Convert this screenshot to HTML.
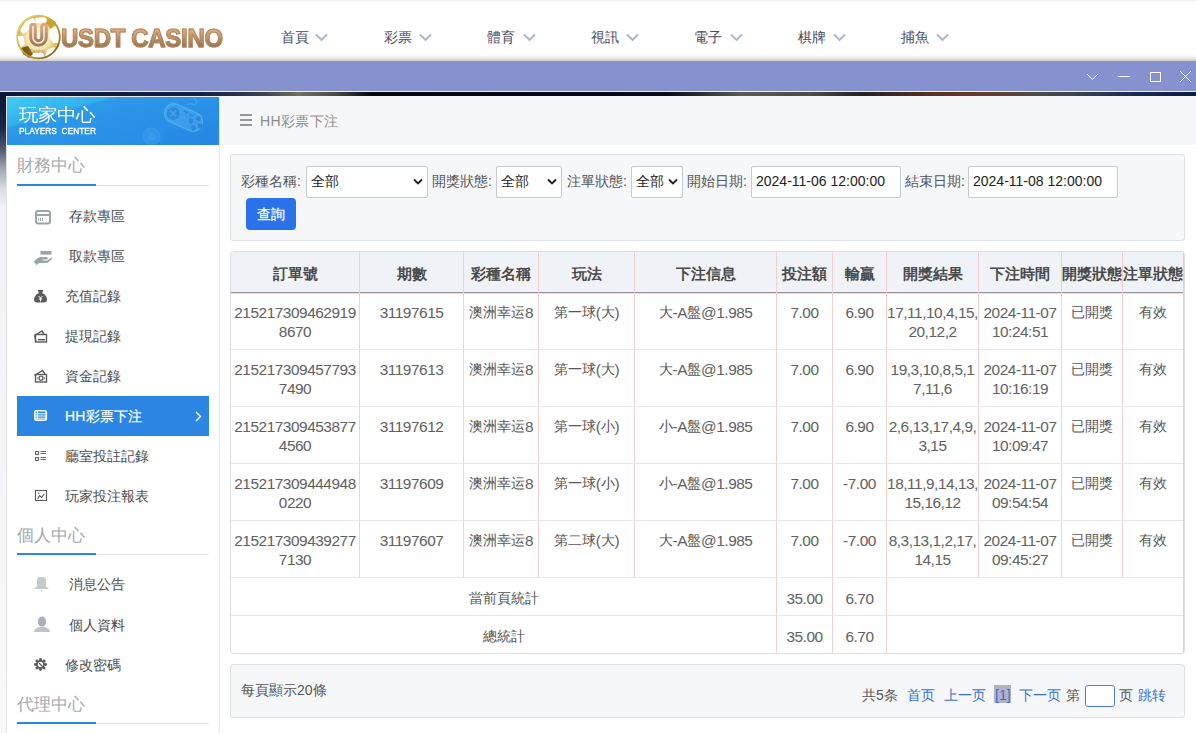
<!DOCTYPE html><html><head><meta charset="utf-8"><style>
*{box-sizing:border-box;margin:0;padding:0}
html,body{width:1196px;height:733px;overflow:hidden;font-family:"Liberation Sans",sans-serif;background:#fff;position:relative}
.a{position:absolute;white-space:nowrap}
#topline{left:0;top:0;width:1196px;height:2px;background:linear-gradient(180deg,#f1f1f1,#f9f9f9)}
#header{left:0;top:2px;width:1196px;height:58px;background:#fff}
#hshadow{left:0;top:54px;width:1196px;height:7px;background:linear-gradient(180deg,#fff 0%,#f6f6f6 35%,#e2e2e2 70%,#cdcbc7 100%)}
.nav{top:28px;font-size:14px;color:#4d4b5e;line-height:18px}
#purple{left:0;top:61px;width:1196px;height:30px;background:#8592cf}
#wline{left:0;top:91px;width:1196px;height:1px;background:#f4f4fa}
#dark{left:0;top:92px;width:1196px;height:4px;background:linear-gradient(90deg,#0c1838 0%,#13204a 17%,#3c4050 22%,#70705f 25%,#4a4a48 28%,#06070f 31%,#040816 50%,#0a0c18 56%,#5a5a58 62%,#4a4a48 68%,#222 72%,#5a3020 78%,#6a3a28 82%,#4a4a48 87%,#3a4250 90%,#1a2a58 95%,#0c1a40 100%)}
#leftbg{left:0;top:96px;width:7px;height:637px;background:linear-gradient(180deg,#0c1636 0px,#1a2546 32px,#4e566e 52px,#9ea3b0 72px,#d8dade 92px,#f3f3f5 112px,#f8f8f9 637px)}
#sidebar{left:6px;top:96px;width:214px;height:637px;background:#fff;border-left:1px solid #dfe2e6;border-right:1px solid #e4e6ea;border-top:1px solid #e8eaee}
#sbhead{left:7px;top:97px;width:212px;height:48px;overflow:hidden;background:linear-gradient(164deg,#3fcbf4 0%,#33b0ee 27%,#2c9ae9 29.5%,#2a92e7 55%,#2486e4 100%)}
#crumb{left:220px;top:96px;width:976px;height:49px;background:#f6f7f9}
.sec{left:17px;font-size:17px;color:#a3a8ae;line-height:20px}
.secl{left:17px;width:192px;height:1px;background:#e3e3e3}
.secb{left:17px;width:79px;height:2px;background:#2b86e3}
.item{font-size:14px;color:#4c4c4c;line-height:16px}
.lbl{font-size:14px;color:#555;line-height:16px}
.sel{background:#fff;border:1px solid #c6c9cd;border-radius:2px;height:32px;font-size:14px;color:#222;line-height:29px;padding-left:4px}
.th{font-size:15px;font-weight:bold;color:#4a4a4a;text-align:center;line-height:18px}
.td{font-size:14px;color:#555;text-align:center;line-height:18.6px;letter-spacing:0}
.n{font-size:15.4px;letter-spacing:-.46px;vertical-align:-0.6px;line-height:18.6px;color:#606060}
.vl{width:1px;background:#f3cfcf}
.hl{height:1px;background:#e6e7ea}
.pg{font-size:14px;line-height:16px;color:#555}
.bl{color:#3c6fd6}
</style></head><body>
<div id="topline" class="a"></div><div id="header" class="a"></div><div id="hshadow" class="a"></div>
<svg class="a" style="left:14px;top:12px" width="50" height="50" viewBox="0 0 50 50">
<defs>
<linearGradient id="gold" x1="0" y1="0" x2="1" y2="1"><stop offset="0" stop-color="#f0dc8c"/><stop offset=".4" stop-color="#d4b040"/><stop offset=".7" stop-color="#b08c28"/><stop offset="1" stop-color="#6a5014"/></linearGradient>
<linearGradient id="ug" x1="0" y1="0" x2="0" y2="1"><stop offset="0" stop-color="#d4a680"/><stop offset="1" stop-color="#a47a55"/></linearGradient>
<radialGradient id="cg" cx=".5" cy=".5" r=".5"><stop offset="0" stop-color="#fffdf4"/><stop offset=".55" stop-color="#f4e6b0"/><stop offset="1" stop-color="#d2b048"/></radialGradient>
</defs>
<circle cx="24.5" cy="25" r="21.5" fill="url(#cg)"/>
<path d="M6 18 L12 9 L19 6 L22 10 L17 16 L9 22Z" fill="#fff"/>
<path d="M21 6 L31 5 L34 9 L29 12 L22 11Z" fill="#fff"/>
<path d="M36 17 L42 14 L46 22 L45 31 L39 31 L35 24Z" fill="#fff"/>
<path d="M4 24 L9 24 L11 32 L6 37 L4 32Z" fill="#fff"/>
<path d="M18 41 L28 40 L31 46 L22 47 L16 45Z" fill="#fff"/>
<path d="M33 38 L40 35 L42 40 L36 45 L31 45Z" fill="#fff"/>
<path d="M7 36 L14 34 L19 42 L15 46 L9 42Z" fill="#7a5c18"/>
<path d="M34 5 L42 10 L37 17 L32 11Z" fill="#c9a030"/>
<circle cx="24.5" cy="25" r="21.3" fill="none" stroke="url(#gold)" stroke-width="1.8"/>
<path d="M19 14.5 v11 a5.5 5.5 0 0 0 11 0 v-11" fill="none" stroke="url(#ug)" stroke-width="7.5" stroke-linecap="round"/>
<path d="M19 14.5 v11 a5.5 5.5 0 0 0 11 0 v-11" fill="none" stroke="#f6ead8" stroke-width="1.6" stroke-linecap="round"/>
<text x="15" y="40.5" font-size="5" fill="#b08866" font-family="Liberation Sans">Casino</text>
</svg>
<div class="a" style="left:61px;top:21.5px;font-size:26.2px;font-weight:bold;letter-spacing:-0.3px;line-height:32px;background:linear-gradient(180deg,#dcac80 28%,#b68c64 55%,#94714a 78%);-webkit-background-clip:text;background-clip:text;color:transparent;-webkit-text-stroke:1.1px #b08862;transform:scaleX(0.913);transform-origin:left top">USDT CASINO</div>
<div class="a nav" style="left:281px">首頁</div>
<svg class="a" style="left:315px;top:33px" width="13" height="9" viewBox="0 0 13 9"><path d="M1 1.5 L6.5 7 L12 1.5" fill="none" stroke="#aab4d0" stroke-width="1.9"/></svg>
<div class="a nav" style="left:384px">彩票</div>
<svg class="a" style="left:419px;top:33px" width="13" height="9" viewBox="0 0 13 9"><path d="M1 1.5 L6.5 7 L12 1.5" fill="none" stroke="#aab4d0" stroke-width="1.9"/></svg>
<div class="a nav" style="left:487px">體育</div>
<svg class="a" style="left:522.5px;top:33px" width="13" height="9" viewBox="0 0 13 9"><path d="M1 1.5 L6.5 7 L12 1.5" fill="none" stroke="#aab4d0" stroke-width="1.9"/></svg>
<div class="a nav" style="left:590.5px">視訊</div>
<svg class="a" style="left:626px;top:33px" width="13" height="9" viewBox="0 0 13 9"><path d="M1 1.5 L6.5 7 L12 1.5" fill="none" stroke="#aab4d0" stroke-width="1.9"/></svg>
<div class="a nav" style="left:694px">電子</div>
<svg class="a" style="left:729.5px;top:33px" width="13" height="9" viewBox="0 0 13 9"><path d="M1 1.5 L6.5 7 L12 1.5" fill="none" stroke="#aab4d0" stroke-width="1.9"/></svg>
<div class="a nav" style="left:798px">棋牌</div>
<svg class="a" style="left:833px;top:33px" width="13" height="9" viewBox="0 0 13 9"><path d="M1 1.5 L6.5 7 L12 1.5" fill="none" stroke="#aab4d0" stroke-width="1.9"/></svg>
<div class="a nav" style="left:901px">捕魚</div>
<svg class="a" style="left:936px;top:33px" width="13" height="9" viewBox="0 0 13 9"><path d="M1 1.5 L6.5 7 L12 1.5" fill="none" stroke="#aab4d0" stroke-width="1.9"/></svg>
<div id="purple" class="a"></div><div id="wline" class="a"></div><div id="dark" class="a"></div>
<svg class="a" style="left:1080px;top:64px" width="116" height="24" viewBox="0 0 116 24"><path d="M7 10 L12.5 15.5 L18 10" fill="none" stroke="#fff" stroke-width="1"/><path d="M38 12.5 H50" stroke="#fff" stroke-width="1"/><rect x="70.5" y="8.5" width="10" height="9" fill="none" stroke="#fff" stroke-width="1"/><path d="M100 7 L111 18 M111 7 L100 18" stroke="#fff" stroke-width="1"/></svg>
<div id="leftbg" class="a"></div><div id="sidebar" class="a"></div>
<div id="sbhead" class="a">
<svg class="a" style="left:0;top:0" width="212" height="48" viewBox="0 0 212 48">
<g transform="translate(176.5,20.5) rotate(24)"><rect x="-20" y="-9.5" width="40" height="19" rx="9.5" fill="#56b2f2" fill-opacity=".45" stroke="#62bcf5" stroke-opacity=".6" stroke-width="1.2"/></g>
<circle cx="166.2" cy="16.5" r="6.3" fill="#2a84dc" opacity=".85"/>
<path d="M163 13.5 L169.4 19.5 M169.4 13.5 L163 19.5" stroke="#4aa6ee" stroke-width="1.8" opacity=".8"/>
<path d="M177 14 L181 16 M182 17 L186 19" stroke="#2a84dc" stroke-width="1.6" opacity=".85"/>
<g fill="#2a84dc" opacity=".85"><circle cx="184" cy="24" r="2.4"/><circle cx="191.5" cy="21.5" r="2.4"/><circle cx="186.5" cy="31" r="2.4"/><circle cx="193" cy="29" r="2.4"/></g>
<path d="M180 8 C183 5 186 9 189 7 C191 5.5 189 3 187.5 1" stroke="#62bcf5" stroke-opacity=".6" stroke-width="1" fill="none"/>
<circle cx="144.6" cy="39.2" r="8.5" fill="#40a2ee" fill-opacity=".4" stroke="#54b0f2" stroke-opacity=".2" stroke-width="1.5"/><circle cx="144.6" cy="40" r="4" fill="#48aaf0" fill-opacity=".35"/>
</svg>
<div class="a" style="left:12px;top:8px;font-size:19px;line-height:22px;color:#fff;transform:scaleY(.93);transform-origin:left top">玩家中心</div>
<div class="a" style="left:12px;top:29px;font-size:9.2px;line-height:11px;color:#fff;letter-spacing:0px;-webkit-text-stroke:.3px #fff;transform:scaleX(0.91);transform-origin:left top">PLAYERS&nbsp; CENTER</div>
</div>
<div class="a sec" style="top:156px">財務中心</div>
<div class="a secl" style="top:185px"></div><div class="a secb" style="top:184px"></div>
<svg class="a" style="left:34px;top:209px" width="18" height="16" viewBox="0 0 18 16"><rect x="2" y="2" width="14" height="12.5" rx="2" fill="none" stroke="#9aa3ab" stroke-width="2"/><path d="M2 6 H16" stroke="#9aa3ab" stroke-width="2"/><path d="M4.5 9 v2.5 M6.5 9 v2.5 M8.5 9 v2.5" stroke="#9aa3ab" stroke-width="1" shape-rendering="crispEdges"/></svg>
<svg class="a" style="left:33px;top:250px" width="20" height="15" viewBox="0 0 20 15"><rect x="7.5" y="1" width="11" height="3.6" fill="#9aa3ab"/><path d="M0.8 11.6 L4.2 8.6 C5.6 7.4 7 7 8.6 7 H13.2 C14.3 7 14.8 7.6 14.8 8.3 C14.8 9 14.3 9.6 13.2 9.6 H9.6 V10.6 H14.4 L18.2 7.6 C18.9 7.1 19.6 7.5 19.3 8.3 L16.2 11.6 C15.4 12.5 14.4 13 13.2 13 H6.2 L3.4 15 Z" fill="#9aa3ab"/></svg>
<svg class="a" style="left:33px;top:289px" width="15" height="14" viewBox="0 0 15 14"><path d="M4.5 1 H10.5 L9 4 C12 5 14 8 14 10.5 C14 12.5 13 13.5 11 13.5 H4 C2 13.5 1 12.5 1 10.5 C1 8 3 5 6 4Z" fill="#5a5a5a"/><path d="M5.5 7 L7.5 9 L9.5 7 M7.5 9 V12.5 M5.8 10 H9.2" stroke="#fff" stroke-width="1" fill="none"/></svg>
<svg class="a" style="left:33px;top:329px" width="15" height="14" viewBox="0 0 15 14"><path d="M1.5 6.5 L9 2 L11 5" fill="none" stroke="#5a5a5a" stroke-width="1.4"/><rect x="2.5" y="5.5" width="11" height="7.5" fill="none" stroke="#5a5a5a" stroke-width="1.4"/><path d="M1.5 6.5 L3 12.5" stroke="#5a5a5a" stroke-width="1.2"/><rect x="5" y="10" width="7" height="1.4" fill="#5a5a5a"/></svg>
<svg class="a" style="left:33px;top:369px" width="15" height="14" viewBox="0 0 15 14"><path d="M1.5 6.5 L9.5 1.5 L12 5" fill="none" stroke="#5a5a5a" stroke-width="1.4"/><rect x="2.5" y="5.5" width="11" height="7.5" fill="none" stroke="#5a5a5a" stroke-width="1.4"/><ellipse cx="8" cy="9.2" rx="2" ry="2" fill="none" stroke="#5a5a5a" stroke-width="1.3"/><path d="M4 9.2 H5 M11 9.2 H12" stroke="#5a5a5a" stroke-width="1.3"/></svg>
<div class="a" style="left:17px;top:396px;width:192px;height:40px;background:#2b86e3"></div>
<svg class="a" style="left:33px;top:409px" width="15" height="13" viewBox="0 0 15 13"><rect x="1.8" y="1.8" width="11.5" height="9.5" rx="1.6" fill="none" stroke="#fff" stroke-width="1.6"/><path d="M1.8 4.8 H13.3 M1.8 7 H13.3 M1.8 9.2 H13.3" stroke="#fff" stroke-width="1.1"/><path d="M4.3 2 V11" stroke="#fff" stroke-width="1"/></svg>
<svg class="a" style="left:34px;top:450px" width="13" height="12" viewBox="0 0 13 12"><rect x="1.5" y="1.5" width="3" height="3" rx=".6" fill="none" stroke="#5a5a5a" stroke-width="1.1"/><rect x="1.5" y="7.5" width="3" height="3" rx=".6" fill="none" stroke="#5a5a5a" stroke-width="1.1"/><path d="M6.5 1.5 H12 M6.5 3.5 H12 M6.5 7.5 H12 M6.5 9.5 H12" stroke="#6a6a6a" stroke-width="1"/></svg>
<svg class="a" style="left:34px;top:489px" width="14" height="14" viewBox="0 0 14 14"><rect x="1.5" y="1.5" width="11" height="10" fill="none" stroke="#5a5a5a" stroke-width="1.1"/><path d="M3.5 10 L5.6 6.6 L7.6 8.4 L10.2 5" fill="none" stroke="#5a5a5a" stroke-width="1.1"/><circle cx="4.6" cy="4.2" r=".7" fill="#5a5a5a"/></svg>
<svg class="a" style="left:33px;top:576px" width="17" height="17" viewBox="0 0 17 17"><path d="M1 13 L4 10.3 V4.5 C4 2.3 5.5 1 7 1 H10 C11.5 1 13 2.3 13 4.5 V10.3 L16 13 Z" fill="#c5cad1"/><path d="M7.3 14 H9.7 L8.5 15.6Z" fill="#c5cad1"/></svg>
<svg class="a" style="left:33px;top:616px" width="18" height="17" viewBox="0 0 18 17"><ellipse cx="9" cy="5.6" rx="4.2" ry="5" fill="#a9b2bb"/><path d="M1 16 C1.5 12.3 5 10.8 9 10.8 C13 10.8 16.5 12.3 17 16Z" fill="#bcc3ca"/></svg>
<svg class="a" style="left:33px;top:657px" width="15" height="15" viewBox="0 0 15 15"><g fill="#5a5a5a"><circle cx="12.60" cy="7.50" r="1.45"/><circle cx="11.11" cy="11.11" r="1.45"/><circle cx="7.50" cy="12.60" r="1.45"/><circle cx="3.89" cy="11.11" r="1.45"/><circle cx="2.40" cy="7.50" r="1.45"/><circle cx="3.89" cy="3.89" r="1.45"/><circle cx="7.50" cy="2.40" r="1.45"/><circle cx="11.11" cy="3.89" r="1.45"/></g><circle cx="7.5" cy="7.5" r="3.6" fill="none" stroke="#5a5a5a" stroke-width="1.8"/><path d="M6 6 L9.5 9.5" stroke="#5a5a5a" stroke-width="1.3"/></svg>
<div class="a item" style="left:69px;top:208px;color:#4c4c4c">存款專區</div>
<div class="a item" style="left:69px;top:248px;color:#4c4c4c">取款專區</div>
<div class="a item" style="left:65px;top:288px;color:#4c4c4c">充值記錄</div>
<div class="a item" style="left:65px;top:328px;color:#4c4c4c">提現記錄</div>
<div class="a item" style="left:65px;top:368px;color:#4c4c4c">資金記錄</div>
<div class="a item" style="left:65px;top:408px;color:#fff"><span style="-webkit-text-stroke:.2px #fff;letter-spacing:.2px">HH彩票下注</span></div>
<div class="a item" style="left:65px;top:448px;color:#4c4c4c">廳室投註記錄</div>
<div class="a item" style="left:65px;top:488px;color:#4c4c4c">玩家投注報表</div>
<div class="a item" style="left:69px;top:576px;color:#4c4c4c">消息公告</div>
<div class="a item" style="left:69px;top:617px;color:#4c4c4c">個人資料</div>
<div class="a item" style="left:65px;top:657px;color:#4c4c4c">修改密碼</div>
<svg class="a" style="left:194px;top:411px" width="9" height="11" viewBox="0 0 9 11"><path d="M2 1 L6.5 5.5 L2 10" fill="none" stroke="#fff" stroke-width="1.4"/></svg>
<div class="a sec" style="top:526px">個人中心</div>
<div class="a secl" style="top:554px"></div><div class="a secb" style="top:553px"></div>
<div class="a sec" style="top:695px">代理中心</div>
<div class="a secl" style="top:723px"></div><div class="a secb" style="top:722px"></div>
<div id="crumb" class="a"></div>
<svg class="a" style="left:239px;top:113px" width="14" height="14" viewBox="0 0 14 14"><path d="M1 2 H13 M1 7 H13 M1 12 H13" stroke="#777" stroke-width="1.5"/></svg>
<div class="a" style="left:260px;top:112.5px;font-size:14px;line-height:16px;color:#8c8c8c;letter-spacing:.35px">HH彩票下注</div>
<div class="a" style="left:230px;top:154px;width:955px;height:87px;background:#f6f7f9;border:1px solid #dcdfe3;border-radius:3px"></div>
<div class="a lbl" style="left:241px;top:173px">彩種名稱:</div>
<div class="a sel" style="left:306px;top:166px;width:122px">全部</div>
<svg class="a" style="left:413px;top:178px" width="10" height="8" viewBox="0 0 10 8"><path d="M1 1.5 L5 5.5 L9 1.5" fill="none" stroke="#222" stroke-width="1.8"/></svg>
<div class="a lbl" style="left:432px;top:173px">開獎狀態:</div>
<div class="a sel" style="left:496px;top:166px;width:66px">全部</div>
<svg class="a" style="left:547px;top:178px" width="10" height="8" viewBox="0 0 10 8"><path d="M1 1.5 L5 5.5 L9 1.5" fill="none" stroke="#222" stroke-width="1.8"/></svg>
<div class="a lbl" style="left:567px;top:173px">注單狀態:</div>
<div class="a sel" style="left:631px;top:166px;width:52px">全部</div>
<svg class="a" style="left:668px;top:178px" width="10" height="8" viewBox="0 0 10 8"><path d="M1 1.5 L5 5.5 L9 1.5" fill="none" stroke="#222" stroke-width="1.8"/></svg>
<div class="a lbl" style="left:687px;top:173px">開始日期:</div>
<div class="a sel" style="left:751px;top:166px;width:150px;color:#222">2024-11-06 12:00:00</div>
<div class="a lbl" style="left:905px;top:173px">結束日期:</div>
<div class="a sel" style="left:968px;top:166px;width:150px;color:#222">2024-11-08 12:00:00</div>
<div class="a" style="left:246px;top:198px;width:50px;height:32px;background:#2a72ea;border-radius:4px;color:#fff;font-size:14px;line-height:33px;text-align:center;-webkit-text-stroke:.25px #fff">查詢</div>
<div class="a" style="left:230px;top:251px;width:955px;height:403px;border:1px solid #d9dce0;border-radius:4px;background:#fff"></div>
<div class="a" style="left:231px;top:252px;width:953px;height:40px;background:#eff2f6;border-radius:3px 3px 0 0"></div>
<div class="a" style="left:231px;top:292px;width:953px;height:1px;background:#9a9090"></div>
<div class="a" style="left:231px;top:293px;width:953px;height:1px;background:#e2dede"></div>
<div class="a vl" style="left:359px;top:252px;height:326px"></div>
<div class="a vl" style="left:463px;top:252px;height:326px"></div>
<div class="a vl" style="left:538px;top:252px;height:326px"></div>
<div class="a vl" style="left:634px;top:252px;height:326px"></div>
<div class="a vl" style="left:776px;top:252px;height:401px"></div>
<div class="a vl" style="left:832px;top:252px;height:401px"></div>
<div class="a vl" style="left:886px;top:252px;height:401px"></div>
<div class="a vl" style="left:978px;top:252px;height:326px"></div>
<div class="a vl" style="left:1061px;top:252px;height:326px"></div>
<div class="a vl" style="left:1122px;top:252px;height:326px"></div>
<div class="a vl" style="left:1183px;top:252px;height:326px"></div>
<div class="a vl" style="left:1183px;top:252px;height:401px;background:#eccbd0"></div>
<div class="a hl" style="left:231px;top:349px;width:952px"></div>
<div class="a hl" style="left:231px;top:406px;width:952px"></div>
<div class="a hl" style="left:231px;top:463px;width:952px"></div>
<div class="a hl" style="left:231px;top:520px;width:952px"></div>
<div class="a hl" style="left:231px;top:577px;width:952px"></div>
<div class="a hl" style="left:231px;top:615px;width:952px"></div>
<div class="a th" style="left:231px;top:265px;width:128px;overflow:visible">訂單號</div>
<div class="a th" style="left:360px;top:265px;width:103px;overflow:visible">期數</div>
<div class="a th" style="left:464px;top:265px;width:74px;overflow:visible">彩種名稱</div>
<div class="a th" style="left:539px;top:265px;width:95px;overflow:visible">玩法</div>
<div class="a th" style="left:635px;top:265px;width:141px;overflow:visible">下注信息</div>
<div class="a th" style="left:777px;top:265px;width:55px;overflow:visible">投注額</div>
<div class="a th" style="left:833px;top:265px;width:53px;overflow:visible">輸贏</div>
<div class="a th" style="left:887px;top:265px;width:91px;overflow:visible">開獎結果</div>
<div class="a th" style="left:979px;top:265px;width:82px;overflow:visible">下注時間</div>
<div class="a th" style="left:1062px;top:265px;width:60px;overflow:visible">開獎狀態</div>
<div class="a th" style="left:1123px;top:265px;width:60px;overflow:visible">注單狀態</div>
<div class="a td" style="left:231px;top:303px;width:128px"><span class="n">215217309462919</span><br><span class="n">8670</span></div>
<div class="a td" style="left:360px;top:303px;width:103px"><span class="n">31197615</span></div>
<div class="a td" style="left:464px;top:303px;width:74px">澳洲幸运<span class="n">8</span></div>
<div class="a td" style="left:539px;top:303px;width:95px">第一球<span class="n">(</span>大<span class="n">)</span></div>
<div class="a td" style="left:635px;top:303px;width:141px">大<span class="n">-A</span>盤<span class="n">@1.985</span></div>
<div class="a td" style="left:777px;top:303px;width:55px"><span class="n">7.00</span></div>
<div class="a td" style="left:833px;top:303px;width:53px"><span class="n">6.90</span></div>
<div class="a td" style="left:887px;top:303px;width:91px"><span class="n">17,11,10,4,15,</span><br><span class="n">20,12,2</span></div>
<div class="a td" style="left:979px;top:303px;width:82px"><span class="n">2024-11-07</span><br><span class="n">10:24:51</span></div>
<div class="a td" style="left:1062px;top:303px;width:60px">已開獎</div>
<div class="a td" style="left:1123px;top:303px;width:60px">有效</div>
<div class="a td" style="left:231px;top:360px;width:128px"><span class="n">215217309457793</span><br><span class="n">7490</span></div>
<div class="a td" style="left:360px;top:360px;width:103px"><span class="n">31197613</span></div>
<div class="a td" style="left:464px;top:360px;width:74px">澳洲幸运<span class="n">8</span></div>
<div class="a td" style="left:539px;top:360px;width:95px">第一球<span class="n">(</span>大<span class="n">)</span></div>
<div class="a td" style="left:635px;top:360px;width:141px">大<span class="n">-A</span>盤<span class="n">@1.985</span></div>
<div class="a td" style="left:777px;top:360px;width:55px"><span class="n">7.00</span></div>
<div class="a td" style="left:833px;top:360px;width:53px"><span class="n">6.90</span></div>
<div class="a td" style="left:887px;top:360px;width:91px"><span class="n">19,3,10,8,5,1</span><br><span class="n">7,11,6</span></div>
<div class="a td" style="left:979px;top:360px;width:82px"><span class="n">2024-11-07</span><br><span class="n">10:16:19</span></div>
<div class="a td" style="left:1062px;top:360px;width:60px">已開獎</div>
<div class="a td" style="left:1123px;top:360px;width:60px">有效</div>
<div class="a td" style="left:231px;top:417px;width:128px"><span class="n">215217309453877</span><br><span class="n">4560</span></div>
<div class="a td" style="left:360px;top:417px;width:103px"><span class="n">31197612</span></div>
<div class="a td" style="left:464px;top:417px;width:74px">澳洲幸运<span class="n">8</span></div>
<div class="a td" style="left:539px;top:417px;width:95px">第一球<span class="n">(</span>小<span class="n">)</span></div>
<div class="a td" style="left:635px;top:417px;width:141px">小<span class="n">-A</span>盤<span class="n">@1.985</span></div>
<div class="a td" style="left:777px;top:417px;width:55px"><span class="n">7.00</span></div>
<div class="a td" style="left:833px;top:417px;width:53px"><span class="n">6.90</span></div>
<div class="a td" style="left:887px;top:417px;width:91px"><span class="n">2,6,13,17,4,9,</span><br><span class="n">3,15</span></div>
<div class="a td" style="left:979px;top:417px;width:82px"><span class="n">2024-11-07</span><br><span class="n">10:09:47</span></div>
<div class="a td" style="left:1062px;top:417px;width:60px">已開獎</div>
<div class="a td" style="left:1123px;top:417px;width:60px">有效</div>
<div class="a td" style="left:231px;top:474px;width:128px"><span class="n">215217309444948</span><br><span class="n">0220</span></div>
<div class="a td" style="left:360px;top:474px;width:103px"><span class="n">31197609</span></div>
<div class="a td" style="left:464px;top:474px;width:74px">澳洲幸运<span class="n">8</span></div>
<div class="a td" style="left:539px;top:474px;width:95px">第一球<span class="n">(</span>小<span class="n">)</span></div>
<div class="a td" style="left:635px;top:474px;width:141px">小<span class="n">-A</span>盤<span class="n">@1.985</span></div>
<div class="a td" style="left:777px;top:474px;width:55px"><span class="n">7.00</span></div>
<div class="a td" style="left:833px;top:474px;width:53px"><span class="n">-7.00</span></div>
<div class="a td" style="left:887px;top:474px;width:91px"><span class="n">18,11,9,14,13,</span><br><span class="n">15,16,12</span></div>
<div class="a td" style="left:979px;top:474px;width:82px"><span class="n">2024-11-07</span><br><span class="n">09:54:54</span></div>
<div class="a td" style="left:1062px;top:474px;width:60px">已開獎</div>
<div class="a td" style="left:1123px;top:474px;width:60px">有效</div>
<div class="a td" style="left:231px;top:531px;width:128px"><span class="n">215217309439277</span><br><span class="n">7130</span></div>
<div class="a td" style="left:360px;top:531px;width:103px"><span class="n">31197607</span></div>
<div class="a td" style="left:464px;top:531px;width:74px">澳洲幸运<span class="n">8</span></div>
<div class="a td" style="left:539px;top:531px;width:95px">第二球<span class="n">(</span>大<span class="n">)</span></div>
<div class="a td" style="left:635px;top:531px;width:141px">大<span class="n">-A</span>盤<span class="n">@1.985</span></div>
<div class="a td" style="left:777px;top:531px;width:55px"><span class="n">7.00</span></div>
<div class="a td" style="left:833px;top:531px;width:53px"><span class="n">-7.00</span></div>
<div class="a td" style="left:887px;top:531px;width:91px"><span class="n">8,3,13,1,2,17,</span><br><span class="n">14,15</span></div>
<div class="a td" style="left:979px;top:531px;width:82px"><span class="n">2024-11-07</span><br><span class="n">09:45:27</span></div>
<div class="a td" style="left:1062px;top:531px;width:60px">已開獎</div>
<div class="a td" style="left:1123px;top:531px;width:60px">有效</div>
<div class="a td" style="left:231px;top:589px;width:545px">當前頁統計</div>
<div class="a td" style="left:777px;top:589px;width:55px"><span class="n">35.00</span></div>
<div class="a td" style="left:833px;top:589px;width:53px"><span class="n">6.70</span></div>
<div class="a td" style="left:231px;top:627px;width:545px">總統計</div>
<div class="a td" style="left:777px;top:627px;width:55px"><span class="n">35.00</span></div>
<div class="a td" style="left:833px;top:627px;width:53px"><span class="n">6.70</span></div>
<div class="a" style="left:230px;top:664px;width:955px;height:54px;background:#f6f7f9;border:1px solid #dcdfe3;border-radius:3px"></div>
<div class="a pg" style="left:241px;top:682px">每頁顯示20條</div>
<div class="a pg" style="left:862px;top:687px">共5条</div>
<div class="a pg bl" style="left:907px;top:687px">首页</div>
<div class="a pg bl" style="left:944px;top:687px">上一页</div>
<div class="a" style="left:994px;top:685px;width:17px;height:18px;background:#afb3c6"></div>
<div class="a pg bl" style="left:995px;top:687px">[1]</div>
<div class="a pg bl" style="left:1019px;top:687px">下一页</div>
<div class="a pg" style="left:1066px;top:687px">第</div>
<div class="a" style="left:1085px;top:685px;width:30px;height:22px;background:#fff;border:1px solid #4a7ee0;border-radius:3px"></div>
<div class="a pg" style="left:1119px;top:687px">页</div>
<div class="a pg bl" style="left:1138px;top:687px">跳转</div>
</body></html>
